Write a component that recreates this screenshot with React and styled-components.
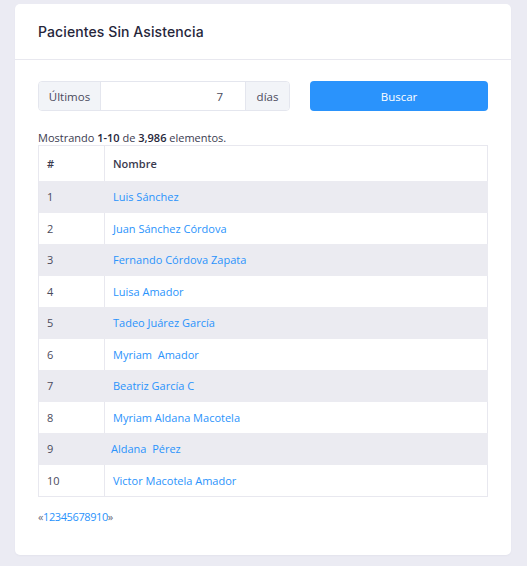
import React from "react";
import styled, { createGlobalStyle } from "styled-components";

const Global = createGlobalStyle`
  html, body { margin: 0; padding: 0; background: #ebebf3; }
  body { font-family: "Open Sans", "Noto Sans", sans-serif; color: #3b3b4f; }
`;

const Page = styled.div`
  padding: 4px 16px 12px 15px;
`;

const Card = styled.div`
  background: #fff;
  border-radius: 5px;
  width: 496px;
  box-shadow: 0 1px 2px rgba(60, 60, 110, 0.04);
`;

const CardHeader = styled.div`
  height: 55px;
  display: flex;
  align-items: center;
  padding: 0 23px;
  border-bottom: 1px solid #e8e8ef;
`;

const Title = styled.h3`
  margin: 0;
  font-family: Inter, "Open Sans", sans-serif;
  font-size: 14px;
  font-weight: 500;
  color: #26263a;
  letter-spacing: 0.1px;
`;

const CardBody = styled.div`
  padding: 21px 23px 31px;
`;

const Toolbar = styled.div`
  display: flex;
  gap: 20px;
  height: 30px;
`;

const InputGroup = styled.div`
  display: flex;
  width: 252px;
  border: 1px solid #e4e6ee;
  border-radius: 4px;
  overflow: hidden;
  box-sizing: border-box;
`;

const Addon = styled.span`
  display: flex;
  align-items: center;
  justify-content: center;
  width: ${(p) => p.$w}px;
  background: #f2f4f8;
  font-size: 11.5px;
  color: #4a4a5c;
  ${(p) => (p.$left ? "border-right: 1px solid #e4e6ee;" : "border-left: 1px solid #e4e6ee;")}
`;

const NumberInput = styled.input`
  flex: 1;
  min-width: 0;
  border: 0;
  outline: none;
  text-align: right;
  padding: 0 22px 0 8px;
  font-family: inherit;
  font-size: 11.5px;
  color: #4a4a5c;
  background: #fff;
`;

const Button = styled.button`
  flex: 1;
  border: 0;
  border-radius: 4px;
  background: #2a93fc;
  color: #fff;
  font-family: inherit;
  font-size: 11.5px;
  cursor: pointer;
`;

const Summary = styled.div`
  margin-top: 19px;
  font-size: 11px;
  color: #3b3b4f;
  line-height: 15px;
  b { font-weight: 600; color: #26263a; }
`;

const Table = styled.table`
  width: 100%;
  border-collapse: collapse;
  border: 1px solid #e8e8ef;
  font-size: 11px;
`;

const Th = styled.th`
  text-align: left;
  height: 35px;
  padding: 0 8px;
  font-weight: 600;
  color: #3a3a4e;
  border-right: 1px solid #e8e8ef;
  width: ${(p) => (p.$narrow ? "49px" : "auto")};
`;

const Tr = styled.tr`
  background: ${(p) => (p.$striped ? "#ebebf1" : "#fff")};
`;

const Td = styled.td`
  height: 31.5px;
  padding: 0 8px;
  color: #4a4a5c;
  border-right: 1px solid ${(p) => (p.$striped ? "#ebebf1" : "#e8e8ef")};
`;

const NameLink = styled.a`
  color: #2a93fc;
  text-decoration: none;
  margin-left: ${(p) => (p.$shift ? "-2px" : "0")};
`;

const Pager = styled.div`
  margin-top: 12px;
  font-size: 11px;
  letter-spacing: -0.4px;
  color: #2a93fc;
  span { color: #6a6a7a; }
`;

const rows = [
  "Luis Sánchez",
  "Juan Sánchez Córdova",
  "Fernando Córdova Zapata",
  "Luisa Amador",
  "Tadeo Juárez García",
  "Myriam  Amador",
  "Beatriz García C",
  "Myriam Aldana Macotela",
  "Aldana  Pérez",
  "Victor Macotela Amador",
];

export default function App() {
  return (
    <>
      <Global />
      <Page>
        <Card>
          <CardHeader>
            <Title>Pacientes Sin Asistencia</Title>
          </CardHeader>
          <CardBody>
            <Toolbar>
              <InputGroup>
                <Addon $w={61} $left>Últimos</Addon>
                <NumberInput defaultValue="7" />
                <Addon $w={43}>días</Addon>
              </InputGroup>
              <Button>Buscar</Button>
            </Toolbar>
            <Summary>
              Mostrando <b>1-10</b> de <b>3,986</b> elementos.
            </Summary>
            <Table>
              <thead>
                <tr>
                  <Th $narrow>#</Th>
                  <Th>Nombre</Th>
                </tr>
              </thead>
              <tbody>
                {rows.map((name, i) => {
                  const striped = i % 2 === 0;
                  return (
                    <Tr key={i} $striped={striped}>
                      <Td $striped={striped}>{i + 1}</Td>
                      <Td $striped={striped}>
                        <NameLink href="#" $shift={i === 8}>
                          {name.replace(/  /g, "\u00a0 ")}
                        </NameLink>
                      </Td>
                    </Tr>
                  );
                })}
              </tbody>
            </Table>
            <Pager>
              <span>«</span>12345678910<span>»</span>
            </Pager>
          </CardBody>
        </Card>
      </Page>
    </>
  );
}
